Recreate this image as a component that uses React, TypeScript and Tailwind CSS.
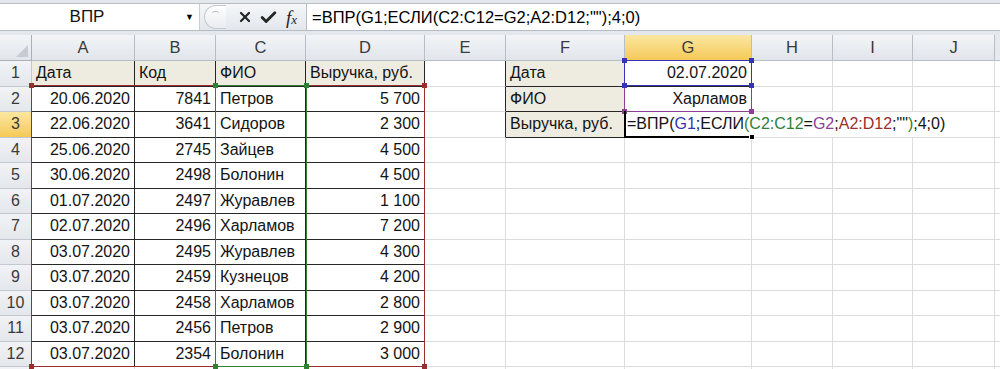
import { X, Check } from "lucide-react";
import type { ReactNode } from "react";

const COLS = ["A", "B", "C", "D", "E", "F", "G", "H", "I", "J"];

const ROWS: string[][] = [
  ["Дата", "Код", "ФИО", "Выручка, руб."],
  ["20.06.2020", "7841", "Петров", "5\u00a0700"],
  ["22.06.2020", "3641", "Сидоров", "2\u00a0300"],
  ["25.06.2020", "2745", "Зайцев", "4\u00a0500"],
  ["30.06.2020", "2498", "Болонин", "4\u00a0500"],
  ["01.07.2020", "2497", "Журавлев", "1\u00a0100"],
  ["02.07.2020", "2496", "Харламов", "7\u00a0200"],
  ["03.07.2020", "2495", "Журавлев", "4\u00a0300"],
  ["03.07.2020", "2459", "Кузнецов", "4\u00a0200"],
  ["03.07.2020", "2458", "Харламов", "2\u00a0800"],
  ["03.07.2020", "2456", "Петров", "2\u00a0900"],
  ["03.07.2020", "2354", "Болонин", "3\u00a0000"],
];

const TBL = "border-r border-b border-[#262626]";
const GRID = "border-r border-b border-[#dadcdf]";
const BEIGE = "bg-[#eeece1]";

function Cell({ children, className = "" }: { children?: ReactNode; className?: string }) {
  return (
    <div className={"flex items-center overflow-hidden whitespace-nowrap px-[4px] text-[16px] text-[#141414] " + className}>
      {children}
    </div>
  );
}

function Handles() {
  return (
    <>
      <span className="absolute -left-[3px] -top-[3px] size-[5px] bg-current" />
      <span className="absolute -right-[3px] -top-[3px] size-[5px] bg-current" />
      <span className="absolute -left-[3px] -bottom-[3px] size-[5px] bg-current" />
      <span className="absolute -right-[3px] -bottom-[3px] size-[5px] bg-current" />
    </>
  );
}

function Range({ className }: { className: string }) {
  return (
    <div className={"pointer-events-none absolute border border-current " + className}>
      <Handles />
    </div>
  );
}

function renderRow(r: number) {
  const d = ROWS[r - 1];
  const out: ReactNode[] = [];
  const inTable = r <= 12;
  const top = r <= 3;

  out.push(
    <div
      key={`h${r}`}
      className={
        "flex items-center justify-center border-r border-b border-[#c3c8cf] text-[16px] text-[#3a3a3a] " +
        (r === 3 ? "bg-linear-to-b from-[#fbe7a0] to-[#f5c955]" : "bg-linear-to-b from-[#f1f3f6] to-[#e4e7eb]")
      }
    >
      {r <= 12 ? r : ""}
    </div>
  );

  // A..D
  if (inTable) {
    const head = r === 1;
    out.push(
      <Cell key="A" className={TBL + (head ? " " + BEIGE : " justify-end")}>{d[0]}</Cell>,
      <Cell key="B" className={TBL + (head ? " " + BEIGE : " justify-end")}>{d[1]}</Cell>,
      <Cell key="C" className={TBL + (head ? " " + BEIGE : "")}>{d[2]}</Cell>,
      <Cell key="D" className={TBL + (head ? " " + BEIGE : " justify-end")}>{d[3]}</Cell>
    );
  } else {
    out.push(
      <Cell key="A" className={GRID} />,
      <Cell key="B" className={GRID} />,
      <Cell key="C" className={GRID} />,
      <Cell key="D" className={GRID} />
    );
  }

  // E
  out.push(
    <Cell
      key="E"
      className={top ? "border-b border-b-[#dadcdf] border-r border-r-[#262626]" : GRID}
    />
  );

  // F
  const fText = r === 1 ? "Дата" : r === 2 ? "ФИО" : r === 3 ? "Выручка, руб." : "";
  out.push(
    <Cell key="F" className={top ? TBL + " " + BEIGE : GRID}>
      {fText}
    </Cell>
  );

  // G (+ overflow for G3)
  if (r === 1) {
    out.push(<Cell key="G" className={TBL + " justify-end"}>02.07.2020</Cell>);
  } else if (r === 2) {
    out.push(<Cell key="G" className={TBL + " justify-end"}>Харламов</Cell>);
  } else if (r === 3) {
    out.push(
      <Cell key="G" className={"col-span-4 pl-[2px] " + GRID}>
        <span>=ВПР(</span>
        <span className="text-[#3434b4]">G1</span>
        <span>;ЕСЛИ</span>
        <span className="text-[#2f8034]">(C2:C12</span>
        <span>=</span>
        <span className="text-[#8c3f95]">G2</span>
        <span>;</span>
        <span className="text-[#9a2d2d]">A2:D12</span>
        <span>;""</span>
        <span className="text-[#2f8034]">)</span>
        <span>;4;0)</span>
      </Cell>
    );
  } else {
    out.push(<Cell key="G" className={GRID} />);
  }

  if (r !== 3) {
    out.push(
      <Cell key="H" className={GRID} />,
      <Cell key="I" className={GRID} />,
      <Cell key="J" className={GRID} />
    );
  }

  out.push(<div key="x" className="border-b border-[#dadcdf]" />);
  return out;
}

export default function App() {
  return (
    <div className="h-[369px] w-[1000px] overflow-hidden bg-white font-['Liberation_Sans',Arial,sans-serif] text-[#141414]">
      {/* Formula bar */}
      <div className="flex h-[35px] flex-col bg-[#e4e7eb]">
        <div className="mt-[3px] flex h-[28px] border-y border-[#b6bcc4] bg-white">
          <div className="flex w-[200px] items-center border-r border-[#c9ced5]">
            <span className="w-[174px] text-center text-[17px]">ВПР</span>
            <span className="ml-[11px] text-[9px] leading-none text-black">▼</span>
          </div>
          <div className="flex w-[107px] items-center border-r border-[#b6bcc4] bg-linear-to-b from-[#f5f7f9] to-[#e3e7ec]">
            <div className="ml-[4px] flex h-[24px] w-[22px] items-start justify-center rounded-l-full border border-r-0 border-[#c3c8cf] bg-linear-to-b from-white to-[#e9ecf0] pt-[5px]">
              <span className="h-[3px] w-[7px] rounded-t-full border-t border-[#b3b8bf]" />
            </div>
            <X className="ml-[11px] text-[#262626]" size={16} strokeWidth={3.4} />
            <Check className="ml-[6px] text-[#262626]" size={19} strokeWidth={3.6} />
            <span className="ml-[8px] font-['Liberation_Serif',serif] text-[19px] italic leading-none text-[#262626]">
              f<span className="text-[13px]">x</span>
            </span>
          </div>
          <div className="flex flex-1 items-center pl-[5px] text-[16.5px] text-black">
            =ВПР(G1;ЕСЛИ(C2:C12=G2;A2:D12;"");4;0)
          </div>
        </div>
      </div>

      {/* Sheet */}
      <div className="relative">
        <div className="grid grid-cols-[32px_103px_81px_90px_119px_81px_119px_127px_81px_80px_82px_5px] grid-rows-[26px_repeat(13,25.5px)]">
          <div className="relative border-r border-b border-[#a9b0b8] bg-linear-to-b from-[#f3f5f8] to-[#e1e5ea]">
            <span className="absolute right-[3px] bottom-[3px] h-0 w-0 border-l-[12px] border-b-[12px] border-l-transparent border-b-[#c7ccd3]" />
          </div>
          {COLS.map((c) => (
            <div
              key={c}
              className={
                "flex items-center justify-center border-r border-b border-[#b7bec7] text-[16.5px] text-[#3a3a3a] " +
                (c === "G"
                  ? "bg-linear-to-b from-[#fbe7a0] to-[#f5c955]"
                  : "bg-linear-to-b from-[#f3f5f8] to-[#e1e5ea]")
              }
            >
              {c}
            </div>
          ))}
          <div className="border-b border-[#b7bec7] bg-[#e6e9ed]" />
          {Array.from({ length: 13 }, (_, i) => renderRow(i + 1))}
        </div>

        {/* Range references from the formula being edited */}
        <Range className="left-[31px] top-[50px] h-[282px] w-[394px] text-[#9a2d2d]" />
        <Range className="left-[215px] top-[50px] h-[282px] w-[92px] text-[#2f8034]" />
        <Range className="left-[624px] top-[50px] h-[27px] w-[128px] text-[#8c3f95]" />
        <Range className="left-[624px] top-[25px] h-[26px] w-[128px] text-[#3434b4]" />

        {/* Active cell G3 */}
        <div className="pointer-events-none absolute left-[624px] top-[76px] h-[27px] w-[128px] border-l-2 border-b-2 border-black">
          <span className="absolute -right-[3px] -bottom-[4px] size-[6px] border border-white bg-black" />
        </div>
      </div>
    </div>
  );
}
